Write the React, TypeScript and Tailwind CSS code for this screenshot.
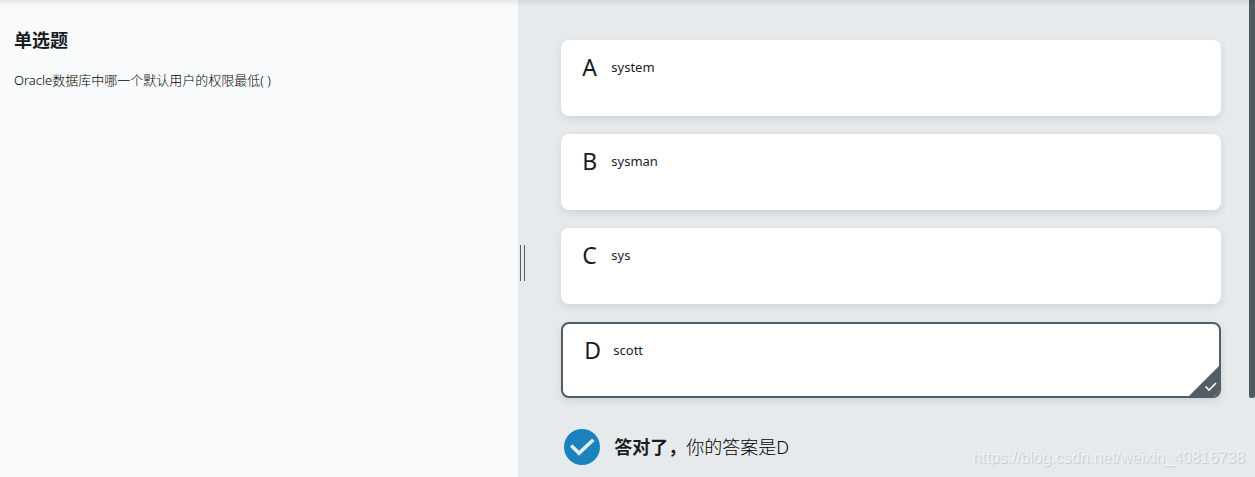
import { useState } from "react";
import clsx from "clsx";

const options = [
  { letter: "A", text: "system" },
  { letter: "B", text: "sysman" },
  { letter: "C", text: "sys" },
  { letter: "D", text: "scott" },
];

function SelectedCorner() {
  return (
    <svg className="absolute right-0 bottom-0 h-[30px] w-[30px]" viewBox="0 0 30 30" aria-hidden="true">
      <path d="M30 0V30H0Z" fill="#535d66" />
      <path d="M16.5 20.5l3.5 3.5 7-7" fill="none" stroke="#fff" strokeWidth="1.7" />
    </svg>
  );
}

function CorrectIcon() {
  return (
    <svg className="h-9 w-9 shrink-0" viewBox="0 0 36 36" aria-hidden="true">
      <circle cx="18" cy="18" r="18" fill="#1a82bd" />
      <path d="M7.2 16.5l7.8 7.8L29.3 10.8" fill="none" stroke="#e7ebee" strokeWidth="3.6" />
    </svg>
  );
}

export default function App() {
  const [answer, setAnswer] = useState("D");

  return (
    <div className="relative flex min-h-screen bg-[#e6eaed] font-['Noto_Sans','Noto_Sans_CJK_SC',sans-serif] text-[#1a1d1f]">
      <section className="w-[41.3%] shrink-0 bg-[#f9fafc] px-3.5 pt-7">
        <h1 className="text-lg leading-6 font-bold">单选题</h1>
        <p className="mt-4 text-[13px] leading-6 font-light text-black">Oracle数据库中哪一个默认用户的权限最低( )</p>
      </section>

      <div className="flex w-2 shrink-0 cursor-col-resize items-center pt-12 pl-0.5">
        <div className="h-9 w-[5px] border-x border-[#56616c]" />
      </div>

      <main className="min-w-0 flex-1 px-7 pt-10 pb-3 pl-[35px]">
        <fieldset className="flex flex-col gap-[18px]">
          {options.map(({ letter, text }) => (
            <label
              key={letter}
              className={clsx(
                "relative flex min-h-[76px] cursor-pointer items-start overflow-hidden rounded-lg bg-white pl-[21px] shadow-[0_3px_8px_rgba(0,0,0,0.1)]",
                answer === letter ? "border-2 border-[#535d66] pt-2.5" : "pt-[11px]"
              )}
            >
              <input
                type="radio"
                name="answer"
                value={letter}
                checked={answer === letter}
                onChange={() => setAnswer(letter)}
                className="sr-only"
              />
              <span className="w-[29px] text-[23px] leading-8">{letter}</span>
              <span className="text-[13px] leading-8">{text}</span>
              {answer === letter && <SelectedCorner />}
            </label>
          ))}
        </fieldset>

        <div className="mt-[31px] flex items-center gap-3.5 pl-[3px]">
          <CorrectIcon />
          <p className="text-lg leading-6 font-light text-black">
            <strong className="font-bold text-[#1a1d1f]">答对了，</strong>你的答案是{answer}
          </p>
        </div>
      </main>

      <div className="h-[398px] w-1.5 shrink-0 rounded-b-xs bg-[#4e5b60]" />

      <div className="pointer-events-none absolute inset-x-0 top-0 h-1.5 bg-linear-to-b from-black/8 to-transparent" />
      <span className="pointer-events-none absolute right-2.5 bottom-[7px] font-['Liberation_Sans',sans-serif] text-base leading-6 text-white/60 [text-shadow:1px_1px_1px_rgba(0,0,0,0.15)]">
        https://blog.csdn.net/weixin_40816738
      </span>
    </div>
  );
}
